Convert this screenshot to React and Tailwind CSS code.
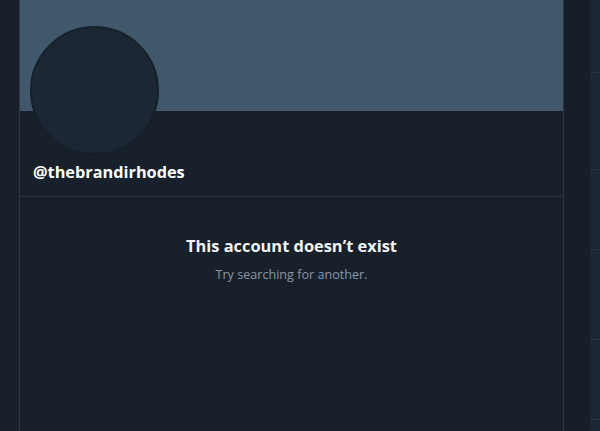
import React from 'react';

const RightPanel = () => (
  <div className="w-[10px] h-full bg-[#1b2734] flex flex-col">
    <div className="h-[73px] border-b border-[#26323e]" />
    <div className="h-[97px] border-b border-[#26323e]" />
    <div className="h-[80px] border-b border-[#26323e]" />
    <div className="h-[90px] border-b border-[#26323e]" />
    <div className="h-[80px] border-b border-[#26323e]" />
  </div>
);

const App = () => {
  return (
    <div
      className="w-[600px] h-[431px] overflow-hidden flex bg-[#17202b]"
      style={{ fontFamily: '"Open Sans", "Noto Sans", sans-serif' }}
    >
      {/* left rail */}
      <div className="w-[19px] shrink-0 bg-[#17202b]" />

      {/* main column */}
      <div className="w-[545px] shrink-0 h-full border-x border-[#2c3641] bg-[#17202b] flex flex-col">
        {/* banner */}
        <div className="relative h-[111px] bg-[#41586c] shrink-0">
          <div className="absolute left-[10px] top-[26px] w-[129px] h-[129px] rounded-full bg-[#1b2735] border-[2px] border-[#16202a]" />
        </div>

        {/* handle */}
        <div className="h-[86px] border-b border-[#2a3440] flex items-end pb-[16px] pl-[13px]">
          <span className="text-[16.3px] font-bold text-white leading-none">@thebrandirhodes</span>
        </div>

        {/* empty state */}
        <div className="flex flex-col items-center pt-[39px]">
          <h2 className="text-[16.4px] font-bold text-[#f2f4f5] leading-tight">This account doesn’t exist</h2>
          <p className="mt-[10px] text-[12.6px] text-[#8b98a5] leading-tight">Try searching for another.</p>
        </div>
      </div>

      {/* gap */}
      <div className="w-[26px] shrink-0 bg-[#161e28]" />

      <RightPanel />
    </div>
  );
};

export default App;
